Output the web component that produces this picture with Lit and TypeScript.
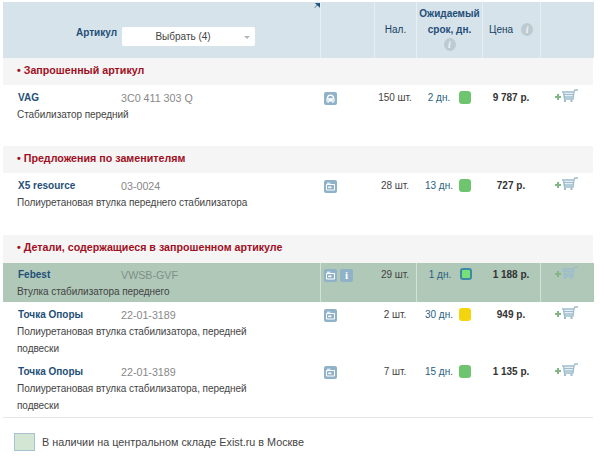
import { LitElement, html, css, svg } from "lit";
import { customElement } from "lit/decorators.js";

interface Row {
  brand: string; code: string; desc: string[]; icon: "car" | "box"; extra?: boolean;
  qty: string; days: string; dot: string; price: string; hl?: boolean; h: number;
}

const carIcon = svg`<svg class="ic" viewBox="0 0 13 13"><rect width="13" height="13" rx="2" fill="#8fb2c8"/><path d="M3.4 6.4Q3.6 3.2 6.5 3.2T9.6 6.4" fill="none" stroke="#fff" stroke-width="1.2"/><path d="M2.4 6.2h8.2v3.4H2.4z" fill="#fff"/><path d="M3.4 9.6h1.5v1.2H3.4zM8.1 9.6h1.5v1.2H8.1z" fill="#fff"/><path d="M3.4 7.4h1.2v1H3.4zM8.4 7.4h1.2v1H8.4z" fill="#8fb2c8"/></svg>`;
const boxIcon = svg`<svg class="ic" viewBox="0 0 13 13"><rect width="13" height="13" rx="2" fill="#8fb2c8"/><path d="M2.5 4.5h8v5.5h-8zM3 3.2h3.4" fill="none" stroke="#fff" stroke-width="1"/><path d="M4.2 6.5h3.2v1.6H4.2z" fill="#fff"/></svg>`;
const cart = svg`<svg class="cart" viewBox="0 0 23 14"><path d="M0 8h6M3 5v6" stroke="#84b584" stroke-width="2" fill="none"/><path d="M7 3h12l-1 7H9M8.5 5.5h10M8.8 8h9.2M19 3l.8-2H23" fill="none" stroke="#9dbccd" stroke-width="1.3"/><path d="M8.6 3.5 9.4 10" fill="none" stroke="#9dbccd" stroke-width="1.3"/><path d="M9 10.5h2v2.5H9zM15.5 10.5h2v2.5h-2z" fill="#9dbccd"/></svg>`;

@customElement("app-root")
export class AppRoot extends LitElement {
  static styles = css`
    :host { display: block; width: 600px; height: 467px; background: #fff; font-family: "Liberation Sans", Arial, sans-serif; font-size: 10px; color: #444; overflow: hidden; }
    .wrap { padding: 2px 6px 0 3px; position: relative; }
    .grid { display: grid; grid-template-columns: 317px 54px 42px 66px 58px 53px; }
    .head { height: 56px; background: #d7e3ea; color: #143f63; font-size: 10px; }
    .head > div { display: flex; align-items: center; justify-content: center; border-left: 1px solid #e8eff3; text-align: center; line-height: 16px; box-sizing: border-box; }
    .head > div.first { border-left: 0; justify-content: flex-start; align-items: flex-start; padding: 23px 0 0 73px; gap: 5px; }
    .art { font-weight: 700; color: #1f4f78; }
    .sel { width: 133px; height: 19px; margin-top: 2px; background: #fff; border-radius: 2px; color: #444; display: flex; align-items: center; justify-content: center; position: relative; padding-right: 11px; box-sizing: border-box; }
    .sel::after { content: ""; position: absolute; right: 5px; top: 9px; border: 3px solid transparent; border-top: 3px solid #b5b5b5; border-bottom: 0; }
    .arrow { position: absolute; left: 314px; top: 3px; }
    .head > div.term { flex-direction: column; justify-content: flex-start; padding-top: 4px; font-weight: 700; color: #1f4f78; }
    .i { display: inline-flex; width: 12px; height: 13px; border-radius: 50%; background: #bccad1; color: #f0f4f6; font: italic 700 10px "Liberation Serif", serif; align-items: center; justify-content: center; }
    .head > div.price-h { gap: 8px; justify-content: flex-start; padding-left: 6px; }
    .price-h .i { margin-top: -2px; }
    .sec { height: 27px; background: #f5f5f5; color: #a00f1e; font-weight: 700; font-size: 10.7px; line-height: 24px; padding-left: 14px; width: 590px; box-sizing: border-box; }
    .sec.tall { height: 28px; }
    .row { padding-top: 6px; box-sizing: border-box; line-height: 14px; }
    .row > div { display: flex; justify-content: center; align-items: flex-start; }
    .row.hl { background: #b0c8b8; padding-top: 5px; }
    .row.hl .sep { border-left: 1px solid #d3e2d8; margin-top: -5px; padding-top: 5px; box-sizing: border-box; }
    .row > div.main { display: block; padding-left: 15px; }
    .top { display: grid; grid-template-columns: 103px 1fr; height: 14px; }
    .brand { color: #1f4f78; font-weight: 700; }
    .code { color: #888; font-size: 10.7px; }
    .hl .code { color: #7f8f87; }
    .desc { margin-top: 1px; line-height: 17px; font-size: 10px; letter-spacing: -0.05px; color: #444; margin-left: -1px; width: 250px; }
    .row > div.icons { gap: 3px; justify-content: flex-start; padding-left: 4px; }
    .row.hl > div.icons { padding-left: 3px; }
    .ic { width: 13px; height: 13px; display: block; margin-top: 1px; }
    .iblock { width: 13px; height: 13px; border-radius: 2px; background: #8fb2c8; color: #fff; font: 700 11px/13px "Liberation Serif", serif; text-align: center; margin-top: 1px; }
    .row > div.days { color: #2a5f80; justify-content: flex-start; }
    .days span:first-child { width: 46px; text-align: center; flex: none; }
    .dot { width: 12px; height: 13px; border-radius: 3px; box-sizing: border-box; margin: 0 0 0 -3px; flex: none; }
    .dot.sel2 { border: 2px solid #3d8aa8; height: 12px; }
    .price { font-weight: 700; color: #333; }
    .row > div.cartc { justify-content: flex-start; padding-left: 15px; }
    .row.hl > div.cartc { padding-left: 14px; }
    .cart { width: 23px; height: 14px; display: block; margin-top: -2px; }
    .line { height: 1px; background: #e6e6e6; width: 590px; }
    .legend { display: flex; align-items: center; gap: 7px; margin: 15px 0 0 11px; font-size: 10.8px; color: #444; }
    .sw { width: 19px; height: 16px; background: #d3e6d3; border: 1px solid #a9c2cf; flex: none; }
  `;

  private renderRow(r: Row) {
    return html`<div class="grid row ${r.hl ? "hl" : ""}" style="height:${r.h}px">
      <div class="main">
        <div class="top"><span class="brand">${r.brand}</span><span class="code">${r.code}</span></div>
        <div class="desc">${r.desc.map((d) => html`${d}<br />`)}</div>
      </div>
      <div class="icons sep">${r.icon === "car" ? carIcon : boxIcon}${r.extra ? html`<div class="iblock">i</div>` : ""}</div>
      <div>${r.qty}</div>
      <div class="days sep"><span>${r.days}</span><span class="dot ${r.hl ? "sel2" : ""}" style="background:${r.dot}"></span></div>
      <div class="price">${r.price}</div>
      <div class="cartc sep">${cart}</div>
    </div>`;
  }

  render() {
    const green = "#6fc46f";
    return html`<div class="wrap">
      <svg class="arrow" width="6" height="5" viewBox="0 0 6 5"><path d="M.5 4.8 4.5 1M1.5.3H6v4z" stroke="#1f4f78" stroke-width=".8" fill="#1f4f78"/></svg>
      <div class="grid head">
        <div class="first"><span class="art">Артикул</span><span class="sel">Выбрать (4)</span></div>
        <div></div>
        <div>Нал.</div>
        <div class="term"><span>Ожидаемый</span><span>срок, дн.</span><span class="i">i</span></div>
        <div class="price-h"><span>Цена</span><span class="i">i</span></div>
        <div></div>
      </div>
      <div class="sec">• Запрошенный артикул</div>
      ${this.renderRow({ brand: "VAG", code: "3C0 411 303 Q", desc: ["Стабилизатор передний"], icon: "car", qty: "150 шт.", days: "2 дн.", dot: green, price: "9 787 р.", h: 61 })}
      <div class="sec">• Предложения по заменителям</div>
      ${this.renderRow({ brand: "X5 resource", code: "03-0024", desc: ["Полиуретановая втулка переднего стабилизатора"], icon: "box", qty: "28 шт.", days: "13 дн.", dot: green, price: "727 р.", h: 62 })}
      <div class="sec tall">• Детали, содержащиеся в запрошенном артикуле</div>
      ${this.renderRow({ brand: "Febest", code: "VWSB-GVF", desc: ["Втулка стабилизатора переднего"], icon: "box", extra: true, qty: "29 шт.", days: "1 дн.", dot: "#77e077", price: "1 188 р.", hl: true, h: 39 })}
      ${this.renderRow({ brand: "Точка Опоры", code: "22-01-3189", desc: ["Полиуретановая втулка стабилизатора, передней", "подвески"], icon: "box", qty: "2 шт.", days: "30 дн.", dot: "#f4d40c", price: "949 р.", h: 57 })}
      ${this.renderRow({ brand: "Точка Опоры", code: "22-01-3189", desc: ["Полиуретановая втулка стабилизатора, передней", "подвески"], icon: "box", qty: "7 шт.", days: "15 дн.", dot: green, price: "1 135 р.", h: 58 })}
      <div class="line"></div>
      <div class="legend"><span class="sw"></span><span>В наличии на центральном складе Exist.ru в Москве</span></div>
    </div>`;
  }
}
